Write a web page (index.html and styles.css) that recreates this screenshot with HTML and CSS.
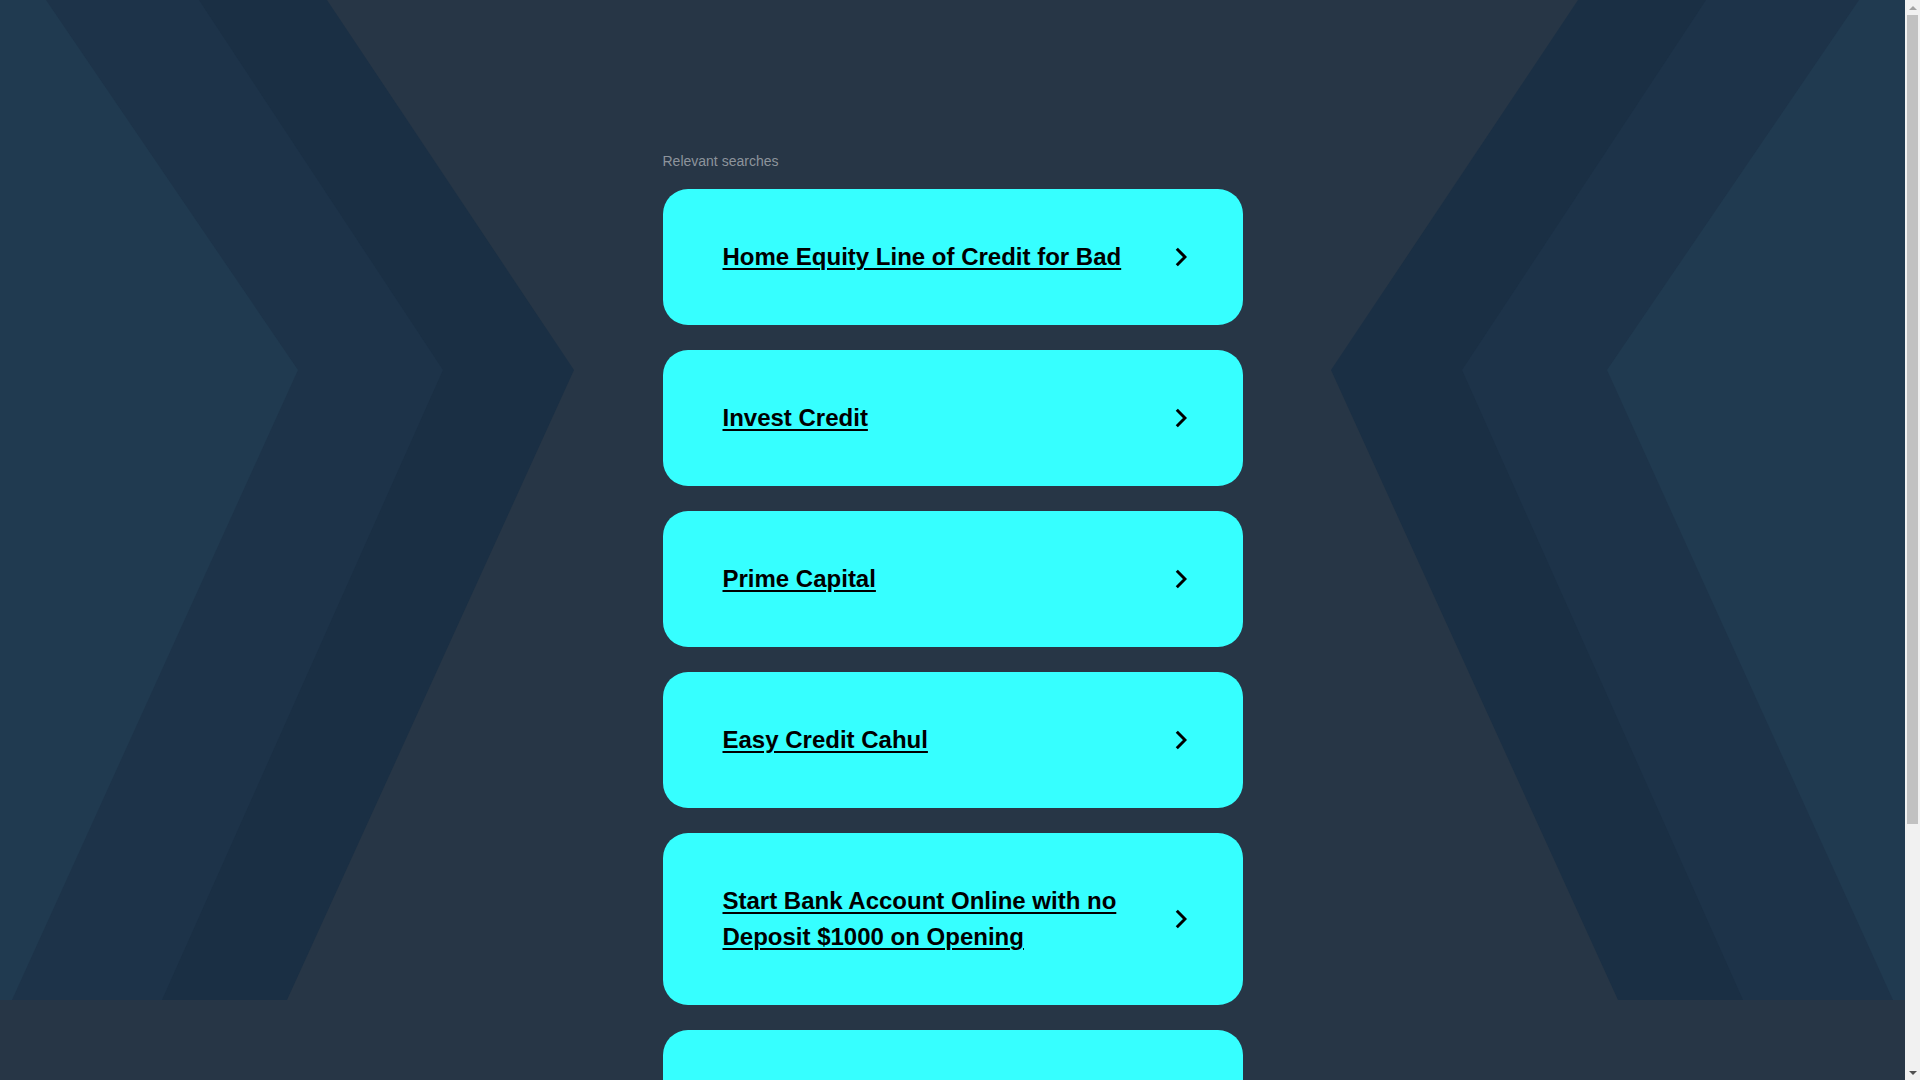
FILE: index.html
```html
<!DOCTYPE html>
<html lang="en">
<head>
<meta charset="utf-8">
<title>Relevant searches</title>
<link rel="stylesheet" href="styles.css">
</head>
<body>
<div class="viewport">
  <div class="bg" aria-hidden="true">
    <svg class="bg-svg" viewBox="0 0 1905 1000" preserveAspectRatio="none">
      <polygon class="band-outer" points="0,0 327,0 574,370 287,1000 0,1000"/>
      <polygon class="band-mid" points="0,0 199,0 443,370 162,1000 0,1000"/>
      <polygon class="band-inner" points="0,0 46,0 298,370 12,1000 0,1000"/>
      <polygon class="band-outer" points="1905,0 1578,0 1331,370 1618,1000 1905,1000"/>
      <polygon class="band-mid" points="1905,0 1706,0 1462,370 1743,1000 1905,1000"/>
      <polygon class="band-inner" points="1905,0 1859,0 1607,370 1893,1000 1905,1000"/>
    </svg>
  </div>
  <main class="page">
    <section class="searches">
      <div class="label">Relevant searches</div>
      <ul class="list">
        <li><a class="card" href="#"><span class="text">Home Equity Line of Credit for Bad</span><svg class="arrow" viewBox="0 0 12 20"><polyline points="1.8,1.8 10,10 1.8,18.2"/></svg></a></li>
        <li><a class="card" href="#"><span class="text">Invest Credit</span><svg class="arrow" viewBox="0 0 12 20"><polyline points="1.8,1.8 10,10 1.8,18.2"/></svg></a></li>
        <li><a class="card" href="#"><span class="text">Prime Capital</span><svg class="arrow" viewBox="0 0 12 20"><polyline points="1.8,1.8 10,10 1.8,18.2"/></svg></a></li>
        <li><a class="card" href="#"><span class="text">Easy Credit Cahul</span><svg class="arrow" viewBox="0 0 12 20"><polyline points="1.8,1.8 10,10 1.8,18.2"/></svg></a></li>
        <li><a class="card" href="#"><span class="text">Start Bank Account Online with no Deposit $1000 on Opening</span><svg class="arrow" viewBox="0 0 12 20"><polyline points="1.8,1.8 10,10 1.8,18.2"/></svg></a></li>
        <li><a class="card" href="#"><span class="text">Credit Card Offers</span><svg class="arrow" viewBox="0 0 12 20"><polyline points="1.8,1.8 10,10 1.8,18.2"/></svg></a></li>
      </ul>
    </section>
  </main>
</div>
<div class="scrollbar" aria-hidden="true">
  <div class="sb-btn"><span class="sb-up"></span></div>
  <div class="sb-track"><div class="sb-thumb"></div></div>
  <div class="sb-btn"><span class="sb-down"></span></div>
</div>
</body>
</html>
```
FILE: styles.css
```css
html, body {
  margin: 0;
  padding: 0;
}
body {
  background: #273646;
  font-family: "Liberation Sans", Arial, sans-serif;
  min-height: 1200px;
}
.viewport {
  position: relative;
  margin-right: 15px;
}
.bg {
  position: absolute;
  top: 0;
  left: 0;
  width: 100%;
  height: 1000px;
  z-index: 0;
}
.bg-svg {
  display: block;
  width: 100%;
  height: 1000px;
}
.band-outer { fill: #1a2f44; }
.band-mid { fill: #1d3349; }
.band-inner { fill: #203a50; }

.page {
  position: relative;
  z-index: 1;
  display: flex;
  justify-content: center;
  padding-top: 151px;
}
.searches {
  width: 580px;
}
.label {
  color: #8d949c;
  font-size: 14px;
  line-height: 20px;
  margin-bottom: 18px;
}
.list {
  list-style: none;
  margin: 0;
  padding: 0;
  display: flex;
  flex-direction: column;
  gap: 25px;
}
.card {
  display: flex;
  align-items: center;
  gap: 30px;
  background: #36ffff;
  border-radius: 25px;
  padding: 50px 56px 50px 60px;
  color: #000;
  text-decoration: none;
}
.text {
  flex: 1;
  font-size: 24px;
  line-height: 36px;
  font-weight: bold;
  text-decoration: underline;
  text-decoration-thickness: 2px;
  text-underline-offset: 3px;
}
.arrow {
  width: 12px;
  height: 20px;
  flex: none;
}
.arrow polyline {
  fill: none;
  stroke: #000;
  stroke-width: 3;
}

/* imitation of the window scrollbar */
.scrollbar {
  position: fixed;
  top: 0;
  right: 0;
  width: 15px;
  height: 100vh;
  background: #f1f1f1;
  display: flex;
  flex-direction: column;
  z-index: 5;
}
.sb-btn {
  height: 15px;
  flex: none;
  display: flex;
  align-items: center;
  justify-content: center;
}
.sb-up {
  width: 0;
  height: 0;
  border-left: 4px solid transparent;
  border-right: 4px solid transparent;
  border-bottom: 4px solid #a3a3a3;
}
.sb-down {
  width: 0;
  height: 0;
  border-left: 4px solid transparent;
  border-right: 4px solid transparent;
  border-top: 4px solid #505050;
}
.sb-track {
  flex: 1;
  padding: 0 2px;
}
.sb-thumb {
  height: 809px;
  background: #c1c1c1;
}
```
